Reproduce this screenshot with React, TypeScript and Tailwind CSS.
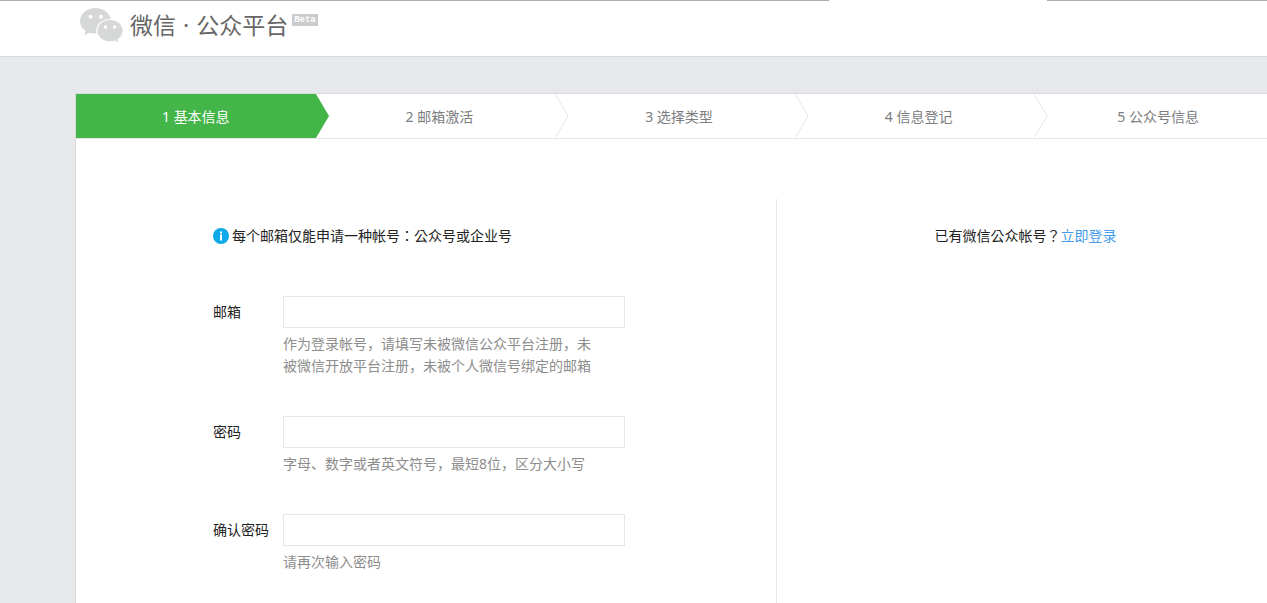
import clsx from 'clsx';

const steps = ['基本信息', '邮箱激活', '选择类型', '信息登记', '公众号信息'];

interface Field {
  id: string;
  label: string;
  type: string;
  hint: string;
}

const fields: Field[] = [
  { id: 'email', label: '邮箱', type: 'email', hint: '作为登录帐号，请填写未被微信公众平台注册，未被微信开放平台注册，未被个人微信号绑定的邮箱' },
  { id: 'password', label: '密码', type: 'password', hint: '字母、数字或者英文符号，最短8位，区分大小写' },
  { id: 'confirm', label: '确认密码', type: 'password', hint: '请再次输入密码' },
];

function Logo() {
  return (
    <svg className="h-9 w-11" viewBox="0 0 44 36" aria-hidden="true">
      <g fill="#d6d7d7">
        <path d="M15.500 1C7 1 0 6.700 0 14c0 4.100 2.200 7.600 5.700 10L4.300 28.300l5.100-2.600c2 .6 4 .9 6.100.9C24 26.600 31 21 31 14S24 1 15.500 1z" />
        <path
          d="M30 12.500c-7.500 0-13.200 5-13.200 11.200s5.700 11.200 13.200 11.200c1.600 0 3.200-.2 4.600-.7l5 2.400-1.400-4.300C41.300 30.300 43.200 27.400 43.200 23.700c0-6.200-5.700-11.200-13.200-11.200z"
          stroke="#fff"
          strokeWidth="1.200"
        />
      </g>
      <g fill="#fff">
        <circle cx="10.500" cy="9.800" r="2" />
        <circle cx="21" cy="9.800" r="2" />
        <circle cx="25.500" cy="20" r="1.700" />
        <circle cx="34.500" cy="20" r="1.700" />
      </g>
    </svg>
  );
}

function InfoIcon() {
  return (
    <svg className="h-4 w-4" viewBox="0 0 16 16" aria-hidden="true">
      <circle cx="8" cy="8" r="8" fill="#0fa9ea" />
      <path d="M7 3.500h2v2H7zM7 6.500h2v6H7z" fill="#fff" />
    </svg>
  );
}

// Arrow that lies over the start of the next step
function StepArrow({ active }: { active: boolean }) {
  return (
    <svg className="absolute top-0 left-full z-10 h-11 w-3.5" viewBox="0 0 14 44" aria-hidden="true">
      {active ? (
        <path d="M0 0L13 22L0 44z" fill="#44b549" />
      ) : (
        <path d="M0 0L13 22L0 44" fill="none" stroke="#e7e7eb" />
      )}
    </svg>
  );
}

export default function App() {
  return (
    <div className="flex min-h-screen flex-col overflow-x-hidden bg-[#e7e8eb] font-['Noto_Sans','Noto_Sans_CJK_SC',sans-serif] text-sm text-[#222]">
      <header className="border-b border-[#d9dadc] bg-white">
        <div className="flex h-px justify-between">
          <div className="w-[65.4%] bg-[#acacac]" />
          <div className="w-[17.4%] bg-[#acacac]" />
        </div>
        <div className="flex h-[55px] items-start pt-1.5 pl-20">
          <Logo />
          <h1 className="ml-1.5 text-[23px] leading-9 font-normal text-[#666]">
            微信<span className="mx-px"> · </span>公众平台
          </h1>
          <span className="mt-[7px] ml-1 h-3 bg-[#ccc] px-0.5 font-['Liberation_Mono',monospace] text-[9px] leading-3 font-bold text-white">
            Beta
          </span>
        </div>
      </header>

      <main className="mt-9 -mr-2 ml-[75px] flex flex-1 flex-col border border-b-0 border-[#d9dadc] bg-white">
        <ol className="grid grid-cols-5 border-b border-[#e7e7eb]">
          {steps.map((step, i) => (
            <li
              key={step}
              className={clsx(
                'relative flex h-11 items-center justify-center pt-0.5',
                i === 0 ? 'bg-[#44b549] text-white' : 'pl-2 text-[#7b7d7f]'
              )}
            >
              {i + 1} {step}
              {i < steps.length - 1 && <StepArrow active={i === 0} />}
            </li>
          ))}
        </ol>

        <div className="mt-15 flex flex-1">
          <form className="w-[58.5%] border-r border-[#e7e7eb] pt-[27px] pl-[137px]">
            <p className="flex items-center gap-[3px] font-['Noto_Sans','Noto_Sans_CJK_TC',sans-serif] leading-5">
              <InfoIcon />
              每个邮箱仅能申请一种帐号：公众号或企业号
            </p>
            <div className="mt-[50px] flex flex-col gap-[39px]">
              {fields.map((field) => (
                <div key={field.id} className="flex">
                  <label htmlFor={field.id} className="w-[70px] leading-8">
                    {field.label}
                  </label>
                  <div className="w-[342px]">
                    <input
                      id={field.id}
                      type={field.type}
                      className="block h-8 w-full border border-[#e7e7eb] bg-white px-2.5 outline-none"
                    />
                    <p className="mt-[5px] w-80 leading-[22px] text-[#8d8d8d]">{field.hint}</p>
                  </div>
                </div>
              ))}
            </div>
          </form>

          <aside className="flex-1 pt-[27px] text-center font-['Noto_Sans','Noto_Sans_CJK_TC',sans-serif] leading-5">
            已有微信公众帐号？
            <a href="#login" className="text-[#459ae9]">
              立即登录
            </a>
          </aside>
        </div>
      </main>
    </div>
  );
}
